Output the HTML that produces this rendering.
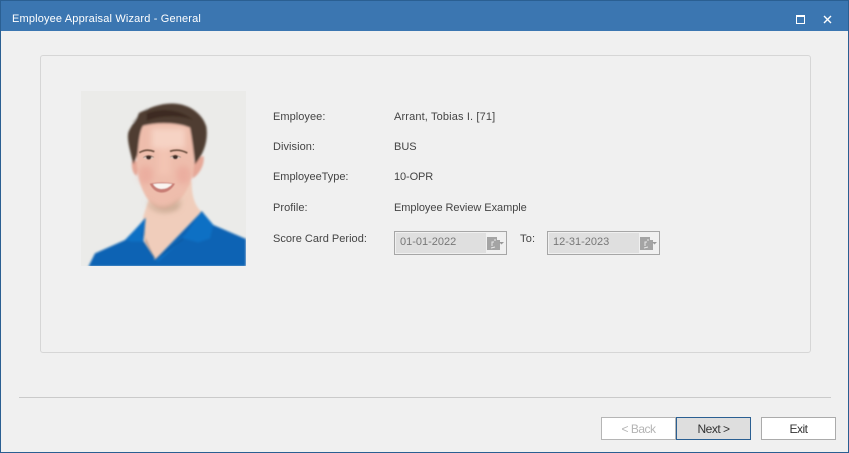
<!DOCTYPE html>
<html><head><meta charset="utf-8"><style>
html,body{margin:0;padding:0;background:#f0f0f0}
#w{position:relative;width:849px;height:453px;overflow:hidden;background:#f0f0f0;font-family:"Liberation Sans",sans-serif;font-size:11px;color:#444}
#w div{position:absolute;box-sizing:border-box;white-space:nowrap}
.t{line-height:14px}
.l{left:273px}
.v{left:394px}
.d{width:113px;height:24px;top:231px;border:1px solid #a6a6a6;background:#f0f0f0}
.d .f{left:1px;top:1px;width:90px;height:20px;background:#dfdfdf}
.d .x{left:5px;top:3px;line-height:14px;color:#777;letter-spacing:0}
.d svg{position:absolute;left:91px;top:4px}
.b{top:417px;height:23px;width:75px;border:1px solid #ababab;background:#fff;text-align:center;line-height:22px;font-size:12px;letter-spacing:-.5px;color:#333}
</style></head><body><div id="w">
<div style="left:0;top:0;width:849px;height:31px;background:#3b76b1;border-top:1px solid #2a5f92"></div>
<div style="left:0;top:0;width:1px;height:453px;background:#2a5f92"></div>
<div style="right:0;top:0;width:1px;height:453px;background:#2a5f92"></div>
<div style="left:0;top:452px;width:849px;height:1px;background:#2a5f92"></div>
<div class="t" style="left:12px;top:12px;color:#fff;letter-spacing:.16px">Employee Appraisal Wizard - General</div>
<svg style="position:absolute;left:796px;top:15px" width="9" height="9"><path d="M.5 1.500h8v7h-8z" fill="none" stroke="#fff"/><path d="M0 1h9" stroke="#fff" stroke-width="2"/></svg>
<svg style="position:absolute;left:823px;top:15px" width="9" height="9"><path d="M1 1l7 7M8 1L1 8" fill="none" stroke="#fff" stroke-width="1.400"/></svg>

<div style="left:40px;top:55px;width:771px;height:298px;border:1px solid #d6d6d6;border-radius:3px"></div>

<svg style="position:absolute;left:81px;top:91px" width="165" height="175" viewBox="18 18 495 525">
<defs><filter id="s" x="-5%" y="-5%" width="110%" height="110%"><feGaussianBlur stdDeviation="3"/></filter>
<filter id="s2" x="-20%" y="-20%" width="140%" height="140%"><feGaussianBlur stdDeviation="9"/></filter>
<filter id="s3" x="-10%" y="-10%" width="120%" height="120%"><feGaussianBlur stdDeviation="1.500"/></filter>
<clipPath id="c"><rect x="18" y="18" width="495" height="525"/></clipPath></defs>
<rect x="18" y="18" width="495" height="525" fill="#ebebe9"/>
<g clip-path="url(#c)"><g filter="url(#s)">
<path d="M170 110L220 64L190 130z" fill="#d8d5d0"/>
<path d="M205 395C212 370 220 350 222 340L350 290C350 330 358 365 385 385L345 470L240 530L205 470z" fill="#f0cdbb"/>
<path d="M205 400L208 450L240 525L212 470z" fill="#a98f7c"/>
<path d="M172 225C168 240 172 268 186 272L192 230zM358 228L385 212C392 235 372 272 352 280z" fill="#e6a898"/>
<path d="M186 130C180 220 186 280 205 320C225 362 250 378 275 372C320 355 350 300 356 250C360 200 356 160 345 120L200 105z" fill="#eebdac"/>
<path d="M175 238C165 195 155 165 160 142C170 118 185 105 192 84C225 66 270 50 310 57C345 62 382 85 394 125C400 165 388 205 360 238C356 200 352 165 345 128C310 113 250 110 205 122C192 135 190 195 187 210z" fill="#503c30"/>
<path d="M215 85C250 70 310 68 355 105C310 88 250 92 215 108z" fill="#3d2b22"/>
</g>
<g filter="url(#s2)">
<path d="M230 130H330V190H230z" fill="#f6d3c4"/>
<path d="M250 190H285V270H250z" fill="#f3c4b3"/>
<ellipse cx="212" cy="270" rx="22" ry="28" fill="#ea9f94" opacity=".5"/>
<ellipse cx="325" cy="270" rx="22" ry="28" fill="#ea9f94" opacity=".5"/>
<path d="M215 345Q262 395 320 340L310 370Q260 395 225 365z" fill="#b8987f" opacity=".8"/>
</g>
<g filter="url(#s3)">
<path d="M193 203Q215 190 238 200" stroke="#6b4e3d" stroke-width="5" fill="none"/>
<path d="M285 199Q310 190 337 204" stroke="#6b4e3d" stroke-width="5" fill="none"/>
<ellipse cx="220" cy="217" rx="16" ry="5" fill="#e8d5cb"/><ellipse cx="301" cy="216" rx="16" ry="5" fill="#e8d5cb"/>
<ellipse cx="221" cy="217" rx="8" ry="6" fill="#3a2a25"/><ellipse cx="301" cy="216" rx="8" ry="6" fill="#3a2a25"/>
<path d="M205 218Q220 207 236 217M286 216Q301 207 317 217" stroke="#5d4436" stroke-width="2" fill="none"/>
<path d="M224 296Q260 288 300 296Q285 323 258 323Q235 320 224 296z" fill="#c87d75"/>
<path d="M234 297Q260 293 292 297Q280 312 258 312Q242 311 234 297z" fill="#faf5f1"/>
</g>
<g filter="url(#s)">
<path d="M40 545L60 505L150 465L175 440L212 398L205 470L240 525L380 380L415 420L513 462V545z" fill="#0d64b4"/>
<path d="M240 525L330 450L380 378L415 420L405 460L370 472L325 460L250 530zM150 465L212 400L200 450L205 470L170 470z" fill="#1170c4"/>
<path d="M240 525L325 460M205 470L238 520" stroke="#0a4f92" stroke-width="3" fill="none"/>
</g></g></svg>

<div class="t l" style="top:110px;letter-spacing:.05px">Employee:</div>
<div class="t v" style="top:110px;letter-spacing:.14px">Arrant, Tobias I. [71]</div>
<div class="t l" style="top:140px;letter-spacing:.05px">Division:</div>
<div class="t v" style="top:140px">BUS</div>
<div class="t l" style="top:170px;letter-spacing:-.03px">EmployeeType:</div>
<div class="t v" style="top:170px;letter-spacing:-.1px">10-OPR</div>
<div class="t l" style="top:201px;letter-spacing:.05px">Profile:</div>
<div class="t v" style="top:201px;letter-spacing:-.05px">Employee Review Example</div>
<div class="t l" style="top:232px;letter-spacing:.02px">Score Card Period:</div>
<div class="d" style="left:394px"><div class="f"></div><div class="x">01-01-2022</div><svg width="18" height="14"><path d="M1 1h10v3h3v10H1z" fill="#a4a4a4"/><path d="M6 10V6h2M9 3v2M5 12l4-1" stroke="#e8e8e8" fill="none"/><path d="M13 6h5l-2.500 2.500z" fill="#999"/></svg></div>
<div class="t" style="left:520px;top:232px;letter-spacing:.2px">To:</div>
<div class="d" style="left:547px"><div class="f"></div><div class="x">12-31-2023</div><svg width="18" height="14"><path d="M1 1h10v3h3v10H1z" fill="#a4a4a4"/><path d="M6 10V6h2M9 3v2M5 12l4-1" stroke="#e8e8e8" fill="none"/><path d="M13 6h5l-2.500 2.500z" fill="#999"/></svg></div>

<div style="left:19px;top:397px;width:812px;height:1px;background:#cacaca"></div>
<div class="b" style="left:601px;color:#b4b4b4;border-color:#b5b5b5">&lt; Back</div>
<div class="b" style="left:676px;background:#dedede;border-color:#2a5f92">Next &gt;</div>
<div class="b" style="left:761px">Exit</div>
</div></body></html>
